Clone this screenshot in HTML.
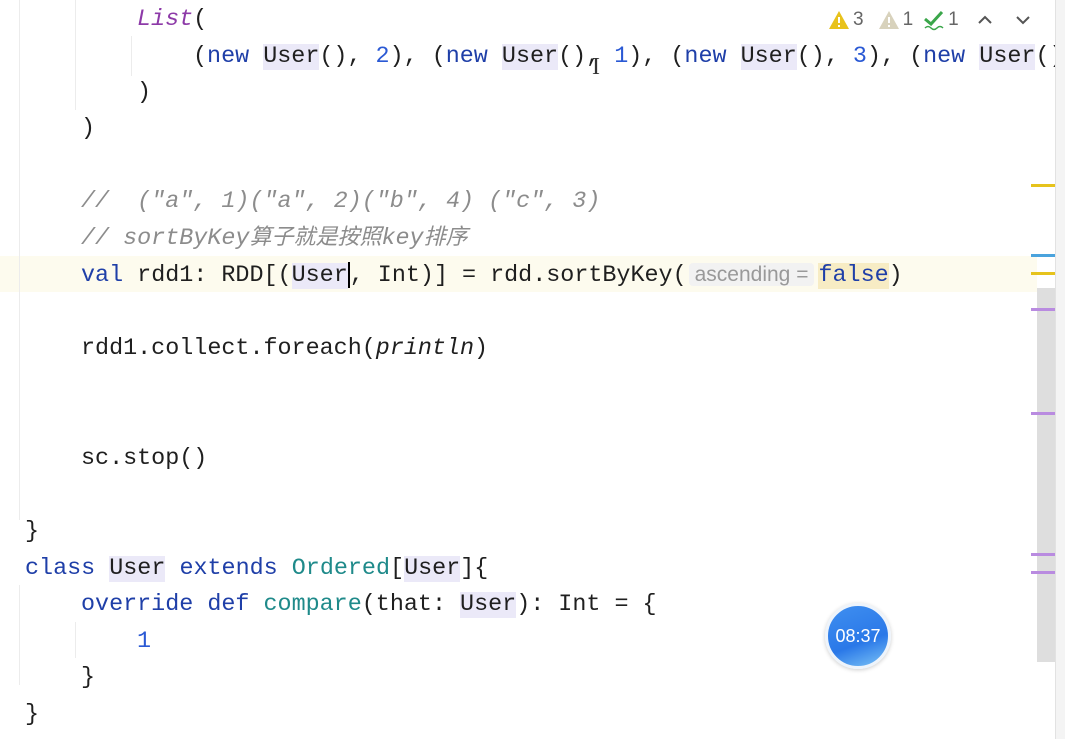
<!DOCTYPE html>
<html><head><meta charset="utf-8"><style>
*{margin:0;padding:0;box-sizing:border-box}
body{width:1065px;height:739px;background:#fff;position:relative;overflow:hidden;font-family:"Liberation Mono","Noto Sans CJK SC",monospace;font-size:23.4px;color:#1f1f1f}
.l{position:absolute;left:0;height:36px;line-height:36px;white-space:pre;margin-top:2px}
.k{color:#1f3fa8}
.n{color:#2a59d4}
.f{color:#8d3aa8;font-style:italic}
.c{color:#8c8c8c;font-style:italic}
.t{color:#1f8a8a}
.u{background:#ebe9f8}
.it{font-style:italic}
.g{position:absolute;width:1px;background:#ececec}
.m{position:absolute;left:1031px;width:24px;height:3px}
</style></head><body>
<div style="position:absolute;left:0;top:256px;width:1037px;height:36px;background:#fdfbee"></div>
<div class="g" style="left:19px;top:0;height:520px"></div>
<div class="g" style="left:75px;top:0;height:110px"></div>
<div class="g" style="left:131px;top:36px;height:40px"></div>
<div class="g" style="left:19px;top:585px;height:100px"></div>
<div class="g" style="left:75px;top:622px;height:36px"></div>

<div class="l" style="top:0;left:137px"><span class="f">List</span>(</div>
<div class="l" style="top:37px;left:193px">(<span class="k">new</span> <span class="u">User</span>(), <span class="n">2</span>), (<span class="k">new</span> <span class="u">User</span>(), <span class="n">1</span>), (<span class="k">new</span> <span class="u">User</span>(), <span class="n">3</span>), (<span class="k">new</span> <span class="u">User</span>()</div>
<div class="l" style="top:73px;left:137px">)</div>
<div class="l" style="top:109px;left:81px">)</div>
<div class="l c" style="top:182px;left:81px">//  ("a", 1)("a", 2)("b", 4) ("c", 3)</div>
<div class="l c" style="top:219px;left:81px">// sortByKey<span style="font-size:22px">算子就是按照</span>key<span style="font-size:22px">排序</span></div>
<div class="l" style="top:255px;left:81px"><span class="k">val</span> rdd1: RDD[(<span class="u">User</span><span style="display:inline-block;width:0;border-left:2px solid #000;height:26px;vertical-align:middle"></span>, Int)] = rdd.sortByKey(<span style="font-family:'Liberation Sans',sans-serif;font-size:21px;color:#999;background:#f2f2f2;border-radius:4px;padding:0 6px;margin:0 4px 0 2px">ascending =</span><span class="k" style="background:#f7ecc4">false</span>)</div>
<div class="l" style="top:329px;left:81px">rdd1.collect.foreach(<span class="it">println</span>)</div>
<div class="l" style="top:439px;left:81px">sc.stop()</div>
<div class="l" style="top:512px;left:25px">}</div>
<div class="l" style="top:549px;left:25px"><span class="k">class</span> <span class="u">User</span> <span class="k">extends</span> <span class="t">Ordered</span>[<span class="u">User</span>]{</div>
<div class="l" style="top:585px;left:81px"><span class="k">override def</span> <span class="t">compare</span>(that: <span class="u">User</span>): Int = {</div>
<div class="l" style="top:622px;left:137px"><span class="n">1</span></div>
<div class="l" style="top:658px;left:81px">}</div>
<div class="l" style="top:695px;left:25px">}</div>

<div style="position:absolute;left:592px;top:54px;font-family:'Liberation Serif';font-size:24px;color:#333">I</div>

<div style="position:absolute;left:828px;top:8px;height:24px;display:flex;align-items:center;font-family:'Liberation Sans',sans-serif;font-size:19px;color:#666">
<svg width="22" height="20" viewBox="0 0 22 20"><path d="M11 1 L21 19 H1 Z" fill="#e8c21c"/><rect x="10" y="7" width="2" height="6" fill="#fff"/><rect x="10" y="15" width="2" height="2" fill="#fff"/></svg><span style="margin:0 14px 0 3px">3</span>
<svg width="22" height="20" viewBox="0 0 22 20"><path d="M11 1 L21 19 H1 Z" fill="#d8d2bc"/><rect x="10" y="7" width="2" height="6" fill="#fff"/><rect x="10" y="15" width="2" height="2" fill="#fff"/></svg><span style="margin:0 10px 0 3px">1</span>
<svg width="22" height="22" viewBox="0 0 22 22"><path d="M2 10 L8 15 L19 3" stroke="#3aa64a" stroke-width="3" fill="none"/><path d="M2 19 Q5 16 8 19 T14 19 T20 19" stroke="#3aa64a" stroke-width="1.5" fill="none"/></svg><span style="margin:0 18px 0 3px">1</span>
<svg width="16" height="12" viewBox="0 0 16 12"><path d="M2 9 L8 3 L14 9" stroke="#555" stroke-width="2" fill="none"/></svg>
<svg width="16" height="12" viewBox="0 0 16 12" style="margin-left:22px"><path d="M2 3 L8 9 L14 3" stroke="#555" stroke-width="2" fill="none"/></svg>
</div>

<div style="position:absolute;left:1055px;top:0;width:10px;height:739px;background:#f4f4f4;border-left:1px solid #e2e2e2"></div>
<div style="position:absolute;left:1037px;top:288px;width:18px;height:374px;background:#dedede"></div>
<div class="m" style="top:184px;background:#e6c31c"></div>
<div class="m" style="top:254px;background:#4aa3dd"></div>
<div class="m" style="top:272px;background:#e6c31c"></div>
<div class="m" style="top:308px;background:#b98be0"></div>
<div class="m" style="top:412px;background:#b98be0"></div>
<div class="m" style="top:553px;background:#b98be0"></div>
<div class="m" style="top:571px;background:#b98be0"></div>

<div style="position:absolute;left:825px;top:603px;width:66px;height:66px;border-radius:50%;background:linear-gradient(160deg,#3f8ff0,#2a78e8 60%,#7cc4f6);border:3px solid #eef4fb;box-shadow:0 1px 4px rgba(0,0,0,.2);color:#fff;font-family:'Liberation Sans',sans-serif;font-size:18px;line-height:60px;text-align:center">08:37</div>
</body></html>
